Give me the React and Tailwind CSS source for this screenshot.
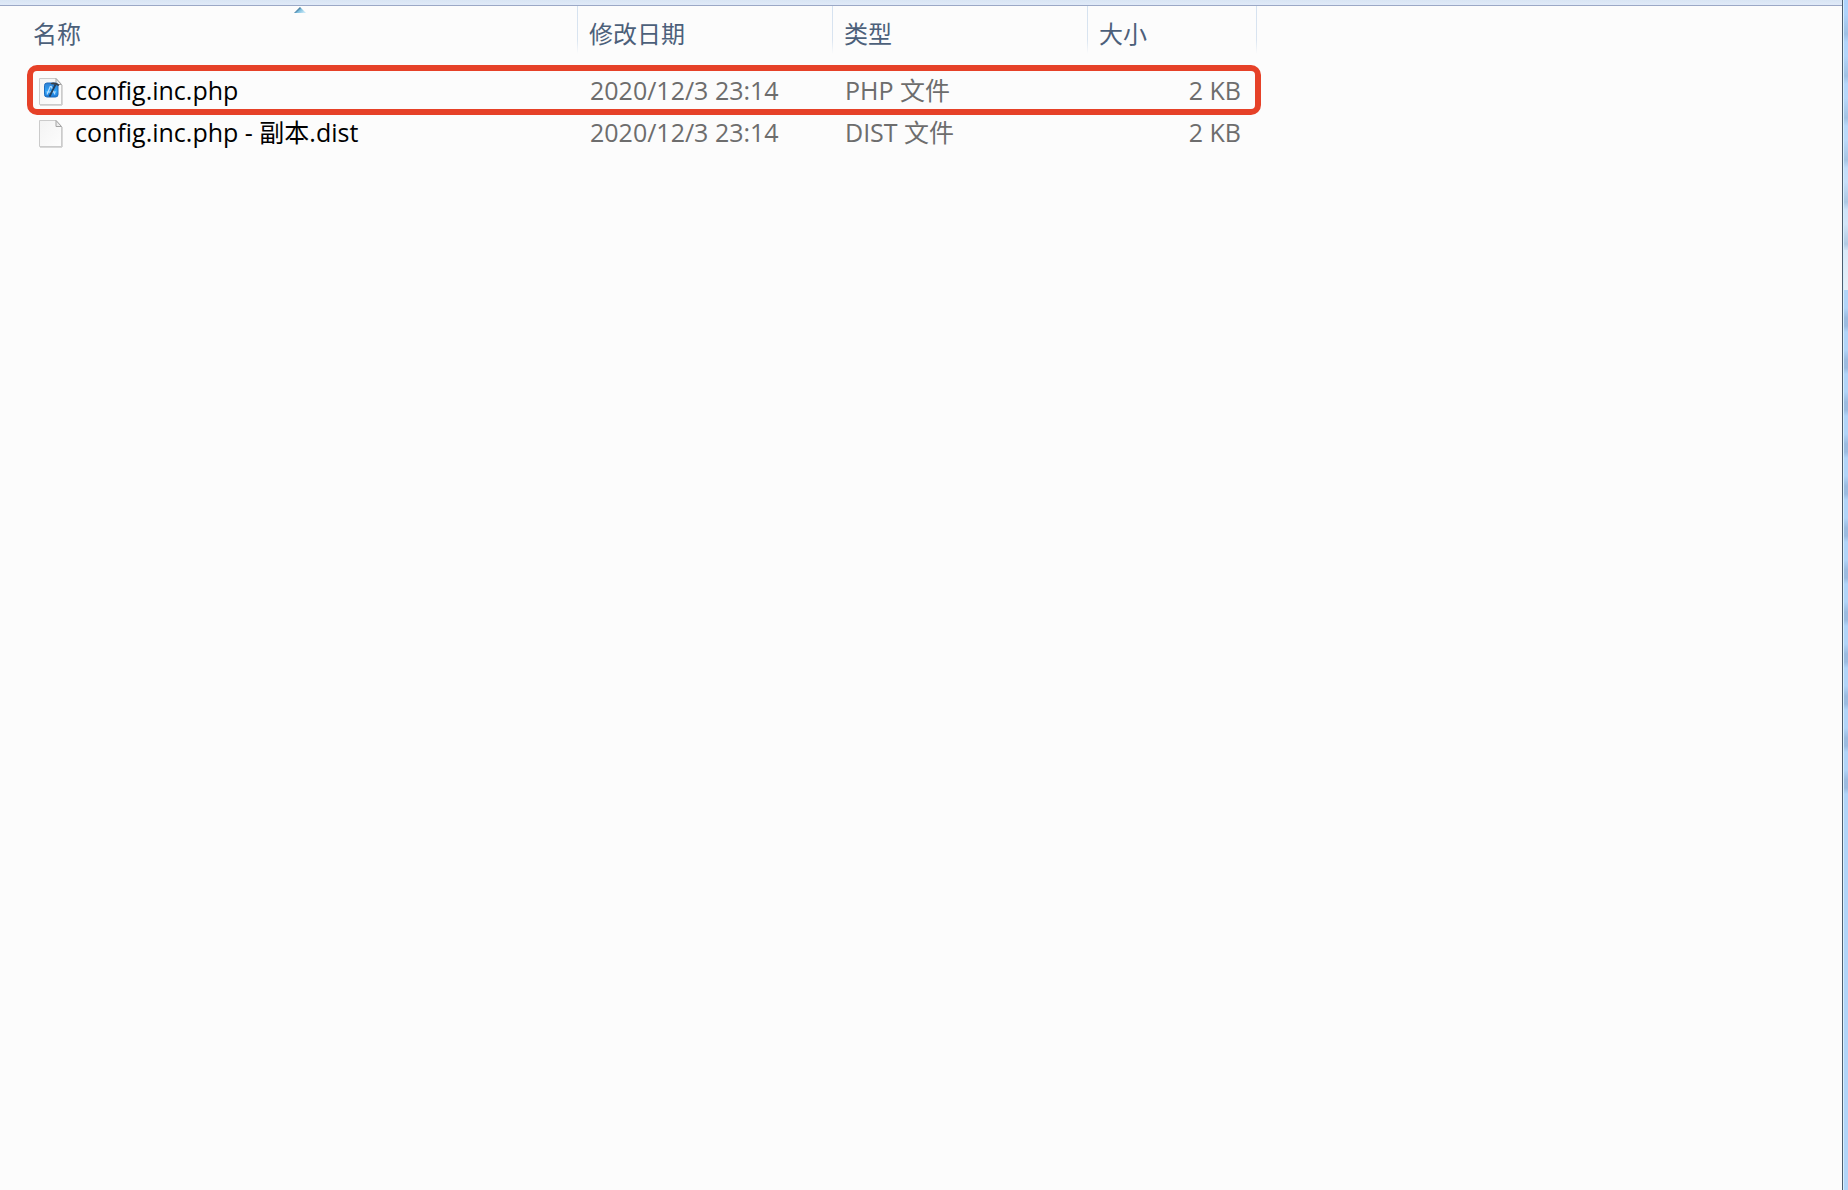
import React from 'react';

const columns = [
  { key: 'name', label: '名称', width: 'w-[556px]', sorted: true },
  { key: 'date', label: '修改日期', width: 'w-[255px]' },
  { key: 'type', label: '类型', width: 'w-[255px]' },
  { key: 'size', label: '大小', width: 'w-[169px]' },
];

const files = [
  { name: 'config.inc.php', date: '2020/12/3 23:14', type: 'PHP 文件', size: '2 KB', icon: 'code', marked: true },
  { name: 'config.inc.php - 副本.dist', date: '2020/12/3 23:14', type: 'DIST 文件', size: '2 KB', icon: 'blank' },
];

function FileIcon({ kind }) {
  return (
    <svg width="24" height="28" viewBox="0 0 24 28" className="mb-1 shrink-0" aria-hidden="true">
      <defs>
        <linearGradient id="paper" x1="0" y1="0" x2="1" y2="1">
          <stop offset="0" stopColor="#f3f3f3" />
          <stop offset="1" stopColor="#fdfdfd" />
        </linearGradient>
        <linearGradient id="blueprint" x1="0" y1="0" x2="0" y2="1">
          <stop offset="0" stopColor="#2f7fd0" />
          <stop offset="0.6" stopColor="#2fa4fa" />
          <stop offset="1" stopColor="#1a74d2" />
        </linearGradient>
      </defs>
      <path d="M1 27H23V7" fill="none" stroke="#b4b4b4" />
      <path d="M.5.5H17L22.5 6.5V26.5H.5Z" fill="url(#paper)" stroke="#cbcbcb" />
      <path d="M17 .5V6.5H22.5Z" fill="#ececec" stroke="#a4a4a4" />
      {kind === 'code' && (
        <g>
          <rect x="5.5" y="5" width="13.500" height="14" rx="2.5" fill="url(#blueprint)" stroke="#1f6dbd" />
          <path d="M11.500 8L8 16.500M12 8L16 16.500M7.500 14H17" fill="none" stroke="#b5deff" strokeWidth="1.200" />
          <path d="M16.500 6.500L10.500 18.500" stroke="#24405f" strokeWidth="1.800" />
          <path d="M11.500 5.200Q15 3.200 20.500 6.800L19.500 8Q16.500 6 12.500 6.300Z" fill="#3c4046" />
        </g>
      )}
    </svg>
  );
}

function SortArrow() {
  return (
    <svg width="12" height="6" viewBox="0 0 12 6" className="absolute left-1/2 top-px -translate-x-1/2" aria-hidden="true">
      <defs>
        <linearGradient id="arrow" x1="0" y1="0" x2="1" y2="0.6">
          <stop offset="0.3" stopColor="#1f4f75" />
          <stop offset="0.6" stopColor="#7dbfdf" />
          <stop offset="1" stopColor="#c5e6f5" />
        </linearGradient>
      </defs>
      <path d="M6 0L12 6H0Z" fill="url(#arrow)" />
    </svg>
  );
}

function HeaderCell({ column }) {
  return (
    <th
      scope="col"
      aria-sort={column.sorted ? 'ascending' : undefined}
      className={`relative h-16 p-0 align-top font-normal ${column.width}`}
    >
      {column.sorted && <SortArrow />}
      <div className="flex h-12">
        <button type="button" className="flex-1 pl-[11px] pt-[7px] text-left text-[24px] leading-10 text-[#4c607a]">
          {column.label}
        </button>
        <span className="w-px bg-linear-to-b from-[#d5e2f0] via-[#d9e4f0] via-70% to-[#fcfcfc]" />
      </div>
    </th>
  );
}

function FileRow({ file }) {
  return (
    <tr className="relative h-[42px] whitespace-nowrap align-top text-[#6d6d6d]">
      <td className="p-0 pl-[17px] text-black">
        <div className="flex items-end gap-3">
          <FileIcon kind={file.icon} />
          <span>{file.name}</span>
        </div>
        {file.marked && (
          <span className="pointer-events-none absolute -bottom-[3px] -right-1 -top-[5px] left-[5px] rounded-[10px] border-6 border-[#e64128]" />
        )}
      </td>
      <td className="p-0 pl-3">{file.date}</td>
      <td className="p-0 pl-3">{file.type}</td>
      <td className="p-0 pr-4 text-right">{file.size}</td>
    </tr>
  );
}

export default function App() {
  return (
    <div className="flex min-h-screen bg-[#fcfcfc] font-['Open_Sans','Noto_Sans_CJK_SC',sans-serif]">
      <main className="min-w-0 flex-1">
        <div className="h-[6px] border-b border-[#9ba8c6] bg-linear-to-b from-[#d9e5f4] to-[#e0eaf8]" />
        <table className="ml-[22px] w-[1235px] table-fixed border-collapse text-[25px] leading-10">
          <thead>
            <tr>
              {columns.map((column) => (
                <HeaderCell key={column.key} column={column} />
              ))}
            </tr>
          </thead>
          <tbody>
            {files.map((file) => (
              <FileRow key={file.name} file={file} />
            ))}
          </tbody>
        </table>
      </main>

      {/* window edge with the desktop showing through */}
      <div className="flex w-[6px]">
        <div className="w-px bg-[#4c5d70]" />
        <div className="w-px bg-[#d9f0fb]" />
        <div className="flex flex-1 flex-col bg-[#b1d4f8]">
          <div className="h-[290px] bg-linear-to-b from-[#add2fb] via-[#bcdafa] to-[#e6eff8]">
            <div className="h-[250px] bg-[repeating-linear-gradient(to_bottom,transparent_0px,transparent_14px,#8fb0d055_26px,#8fb0d088_34px,transparent_42px)]" />
          </div>
          <div className="h-[510px] bg-[repeating-linear-gradient(to_bottom,transparent_0px,transparent_18px,#8dabd099_28px,#8dabd099_36px,transparent_42px)]" />
        </div>
      </div>
    </div>
  );
}
